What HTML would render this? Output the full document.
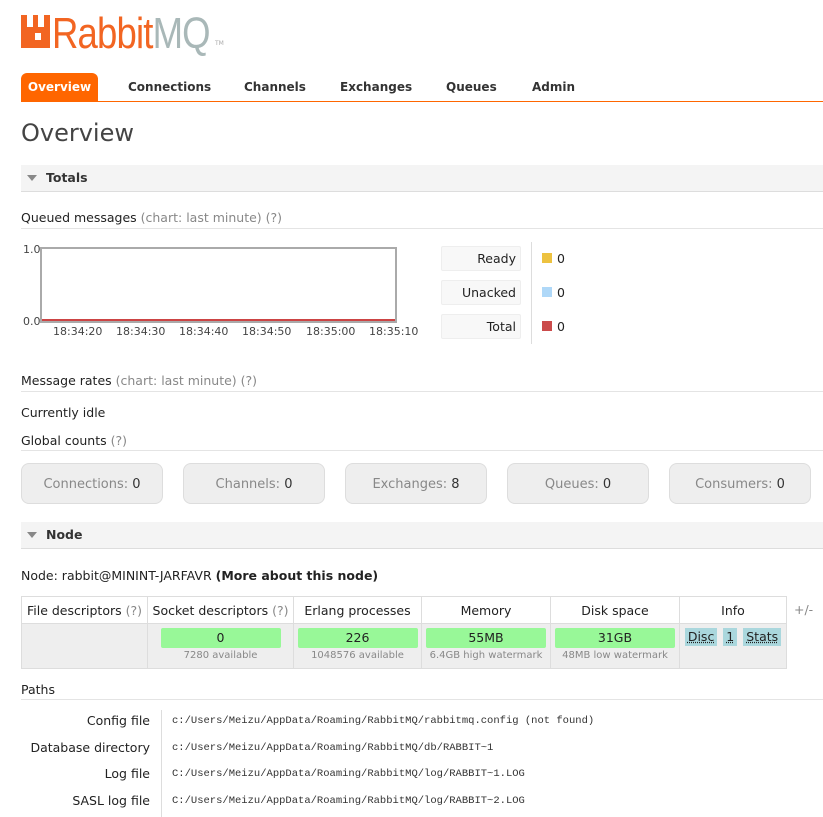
<!DOCTYPE html>
<html><head><meta charset="utf-8">
<style>
*{margin:0;padding:0;box-sizing:border-box}
body{width:823px;height:817px;background:#fff;font-family:"DejaVu Sans","Liberation Sans",sans-serif;font-size:12px;color:#222;position:relative;overflow:hidden}
.a{position:absolute;white-space:nowrap}
.g{color:#888}
.tab{position:absolute;top:73px;height:28px;line-height:28px;font-weight:bold;font-size:12px;color:#333}
.bar{position:absolute;left:21px;right:0;height:27px;background:#f4f4f4;border-bottom:1px solid #ddd;font-weight:bold;font-size:12.5px;line-height:26px;padding-left:25px;color:#333}
.bar:before{content:"";position:absolute;left:6px;top:10px;border-left:5px solid transparent;border-right:5px solid transparent;border-top:6px solid #888}
.hr{position:absolute;left:21px;right:0;height:1px;background:#e4e4e4}
.lg{position:absolute;left:441px;width:80px;height:25px;background:#f8f8f8;border:1px solid #eee;border-radius:2px;text-align:right;padding-right:4px;line-height:24px;font-size:12.5px}
.sq{position:absolute;left:542px;width:10px;height:10px}
.btn{position:absolute;top:463px;width:142px;height:41px;background:#eee;border:1px solid #ddd;border-radius:8px;text-align:center;line-height:42px;font-size:13px;color:#888}
.btn b{font-weight:normal;color:#333}
table{position:absolute;left:21px;top:596px;border-collapse:collapse;font-size:12.5px}
td,th{border:1px solid #ddd;font-weight:normal;text-align:center}
th{height:27px;padding:0 4px}
td{background:#eee;height:45px;vertical-align:top;padding-top:4px}
.gr{background:#98f898;margin:0 auto;height:20px;line-height:20px;border-radius:2px}
.sub{font-size:10px;color:#888;margin-top:2px}
.inf{display:inline-block;background:#aad7dd;padding:0 3px;height:18px;line-height:18px;margin:0 1px;text-decoration:underline dotted}
.pl{position:absolute;right:673px;font-size:12.5px}
.pv{position:absolute;left:172px;font-family:"Liberation Mono","DejaVu Sans Mono",monospace;font-size:10.5px;color:#333}
.t{position:absolute;top:325px;font-size:11px;color:#444}
</style></head><body>
<div class="a" style="left:21px;top:15px;width:29px;height:33px;background:#f26522"></div>
<div class="a" style="left:27px;top:15px;width:6px;height:12px;background:#fff"></div>
<div class="a" style="left:38px;top:15px;width:6px;height:12px;background:#fff"></div>
<div class="a" style="left:35px;top:33px;width:6px;height:7px;background:#fff"></div>
<div class="a" style="left:52px;top:9px;font-family:'Liberation Sans',sans-serif;font-size:44px;letter-spacing:-1px;color:#f26522;transform:scaleX(0.83);transform-origin:0 0">Rabbit<span style="color:#a9b8b8">MQ</span></div>
<div class="a" style="left:215px;top:40px;font-size:6px;color:#aaa">TM</div>
<div class="tab" style="left:21px;width:77px;background:#f60;color:#fff;border-radius:6px 6px 0 0;text-align:center">Overview</div>
<div class="tab" style="left:128px">Connections</div>
<div class="tab" style="left:244px">Channels</div>
<div class="tab" style="left:340px">Exchanges</div>
<div class="tab" style="left:446px">Queues</div>
<div class="tab" style="left:532px">Admin</div>
<div class="a" style="left:21px;right:0;top:101px;height:1px;background:#f60"></div>
<div class="a" style="left:21px;top:119px;font-size:24px;color:#444">Overview</div>
<div class="bar" style="top:165px">Totals</div>
<div class="a" style="left:21px;top:210px;font-size:12.5px">Queued messages <span class="g">(chart: last minute) (?)</span></div>
<div class="hr" style="top:228px"></div>
<div class="a" style="left:23px;top:243px;font-size:11px;color:#444">1.0</div>
<div class="a" style="left:23px;top:315px;font-size:11px;color:#444">0.0</div>
<div class="a" style="left:40px;top:247px;width:357px;height:76px;border:2px solid #aaa"></div>
<div class="a" style="left:42px;top:319px;width:353px;height:2px;background:#c44"></div>
<div class="t" style="left:53px">18:34:20</div>
<div class="t" style="left:116px">18:34:30</div>
<div class="t" style="left:179px">18:34:40</div>
<div class="t" style="left:242px">18:34:50</div>
<div class="t" style="left:306px">18:35:00</div>
<div class="t" style="left:369px">18:35:10</div>
<div class="lg" style="top:246px">Ready</div>
<div class="lg" style="top:280px">Unacked</div>
<div class="lg" style="top:314px">Total</div>
<div class="a" style="left:531px;top:242px;width:1px;height:102px;background:#ddd"></div>
<div class="sq" style="top:253px;background:#edc240"></div>
<div class="sq" style="top:287px;background:#afd8f8"></div>
<div class="sq" style="top:321px;background:#cb4b4b"></div>
<div class="a" style="left:557px;top:251px;font-size:12.5px">0</div>
<div class="a" style="left:557px;top:285px;font-size:12.5px">0</div>
<div class="a" style="left:557px;top:319px;font-size:12.5px">0</div>
<div class="a" style="left:21px;top:373px;font-size:12.5px">Message rates <span class="g">(chart: last minute) (?)</span></div>
<div class="hr" style="top:391px"></div>
<div class="a" style="left:21px;top:405px;font-size:12.5px">Currently idle</div>
<div class="a" style="left:21px;top:433px;font-size:12.5px">Global counts <span class="g">(?)</span></div>
<div class="hr" style="top:450px"></div>
<div class="btn" style="left:21px">Connections: <b>0</b></div>
<div class="btn" style="left:183px">Channels: <b>0</b></div>
<div class="btn" style="left:345px">Exchanges: <b>8</b></div>
<div class="btn" style="left:507px">Queues: <b>0</b></div>
<div class="btn" style="left:669px">Consumers: <b>0</b></div>
<div class="bar" style="top:522px">Node</div>
<div class="a" style="left:21px;top:568px;font-size:12.5px">Node: rabbit@MININT-JARFAVR <b>(More about this node)</b></div>
<table>
<tr><th style="width:126px">File descriptors <span class="g">(?)</span></th><th style="width:146px">Socket descriptors <span class="g">(?)</span></th><th style="width:128px">Erlang processes</th><th style="width:129px">Memory</th><th style="width:129px">Disk space</th><th style="width:107px">Info</th></tr>
<tr><td></td>
<td><div class="gr" style="width:120px">0</div><div class="sub">7280 available</div></td>
<td><div class="gr" style="width:120px">226</div><div class="sub">1048576 available</div></td>
<td><div class="gr" style="width:120px">55MB</div><div class="sub">6.4GB high watermark</div></td>
<td><div class="gr" style="width:120px">31GB</div><div class="sub">48MB low watermark</div></td>
<td><span class="inf">Disc</span> <span class="inf">1</span> <span class="inf">Stats</span></td></tr>
</table>
<div class="a g" style="left:794px;top:602px;font-size:12.5px">+/-</div>
<div class="a" style="left:21px;top:682px;font-size:12.5px">Paths</div>
<div class="hr" style="top:699px"></div>
<div class="a" style="left:161px;top:710px;width:1px;height:107px;background:#ddd"></div>
<div class="pl" style="top:713px">Config file</div>
<div class="pl" style="top:740px">Database directory</div>
<div class="pl" style="top:766px">Log file</div>
<div class="pl" style="top:793px">SASL log file</div>
<div class="pv" style="top:715px">c:/Users/Meizu/AppData/Roaming/RabbitMQ/rabbitmq.config (not found)</div>
<div class="pv" style="top:742px">c:/Users/Meizu/AppData/Roaming/RabbitMQ/db/RABBIT~1</div>
<div class="pv" style="top:768px">C:/Users/Meizu/AppData/Roaming/RabbitMQ/log/RABBIT~1.LOG</div>
<div class="pv" style="top:795px">C:/Users/Meizu/AppData/Roaming/RabbitMQ/log/RABBIT~2.LOG</div>
</body></html>
